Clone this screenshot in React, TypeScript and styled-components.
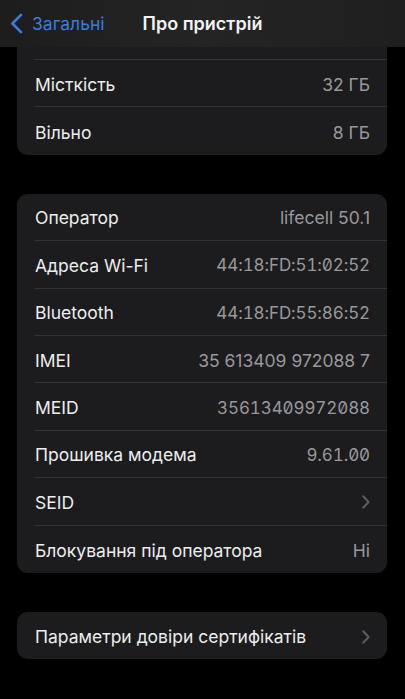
import React from "react";
import styled, { createGlobalStyle } from "styled-components";

const GlobalStyle = createGlobalStyle`
  html, body {
    margin: 0;
    padding: 0;
    background: #000;
  }
  body {
    font-family: Inter, "Noto Sans", "Liberation Sans", sans-serif;
    -webkit-font-smoothing: antialiased;
  }
`;

const Screen = styled.div`
  width: 405px;
  height: 699px;
  overflow: hidden;
  background: #000;
  display: flex;
  flex-direction: column;
`;

const NavBar = styled.header`
  flex: none;
  height: 47px;
  display: grid;
  grid-template-columns: 1fr auto 1fr;
  align-items: center;
  background: linear-gradient(90deg, #1d1d1d 0%, #242424 50%, #1f1f1f 100%);
`;

const BackButton = styled.button`
  justify-self: start;
  display: flex;
  align-items: center;
  gap: 9px;
  padding: 0 0 0 10px;
  border: 0;
  background: none;
  color: #3b7ddb;
  font-family: inherit;
  font-size: 17.5px;
  cursor: pointer;
`;

const NavTitle = styled.h1`
  margin: 0;
  color: #f2f2f2;
  font-size: 18px;
  font-weight: 600;
`;

const Content = styled.main`
  flex: 1;
  display: flex;
  flex-direction: column;
  gap: 39px;
  padding: 0 18px 0 17px;
`;

const Card = styled.section<{ $clipped?: boolean }>`
  background: #1c1c1e;
  border-radius: ${({ $clipped }) => ($clipped ? "0 0 11px 11px" : "11px")};
  overflow: hidden;
`;

const ClippedRow = styled.div`
  height: 12px;
  margin-left: 17px;
  border-bottom: 1px solid #333335;
`;

const Row = styled.div`
  box-sizing: border-box;
  height: 47.4px;
  margin-left: 18px;
  padding: 2px 17px 0 0;
  display: flex;
  align-items: center;
  justify-content: space-between;
  border-bottom: 1px solid #333335;

  &:last-child {
    border-bottom: 0;
  }
`;

const Label = styled.span`
  color: #ededed;
  font-size: 17.5px;
  white-space: nowrap;
`;

const Value = styled.span<{ $mono?: boolean }>`
  color: #98989c;
  font-size: ${({ $mono }) => ($mono ? "17px" : "17.5px")};
  letter-spacing: ${({ $mono }) => ($mono ? "-0.1px" : "0")};
  font-feature-settings: ${({ $mono }) => ($mono ? '"tnum", "zero"' : "normal")};
  white-space: nowrap;
`;

const Chevron = () => (
  <svg width="8" height="14" viewBox="0 0 8 14" fill="none">
    <path
      d="M1.2 1.2 6.6 7l-5.4 5.8"
      stroke="#5b5b5f"
      strokeWidth="2"
      strokeLinecap="round"
      strokeLinejoin="round"
    />
  </svg>
);

const BackChevron = () => (
  <svg width="13" height="21" viewBox="0 0 13 21" fill="none">
    <path
      d="M11 1.8 2.4 10.5l8.6 8.7"
      stroke="#3b7ddb"
      strokeWidth="2.6"
      strokeLinecap="round"
      strokeLinejoin="round"
    />
  </svg>
);

type Item = { label: string; value?: string; mono?: boolean; link?: boolean };

const storage: Item[] = [
  { label: "Місткість", value: "32 ГБ" },
  { label: "Вільно", value: "8 ГБ" },
];

const network: Item[] = [
  { label: "Оператор", value: "lifecell 50.1" },
  { label: "Адреса Wi-Fi", value: "44:18:FD:51:02:52", mono: true },
  { label: "Bluetooth", value: "44:18:FD:55:86:52", mono: true },
  { label: "IMEI", value: "35 613409 972088 7" },
  { label: "MEID", value: "35613409972088", mono: true },
  { label: "Прошивка модема", value: "9.61.00", mono: true },
  { label: "SEID", link: true },
  { label: "Блокування під оператора", value: "Ні" },
];

const trust: Item[] = [{ label: "Параметри довіри сертифікатів", link: true }];

const Rows = ({ items }: { items: Item[] }) => (
  <>
    {items.map((item) => (
      <Row key={item.label}>
        <Label>{item.label}</Label>
        {item.link ? <Chevron /> : <Value $mono={item.mono}>{item.value}</Value>}
      </Row>
    ))}
  </>
);

const App: React.FC = () => (
  <>
    <GlobalStyle />
    <Screen>
      <NavBar>
        <BackButton>
          <BackChevron />
          Загальні
        </BackButton>
        <NavTitle>Про пристрій</NavTitle>
        <span />
      </NavBar>
      <Content>
        <Card $clipped>
          <ClippedRow />
          <Rows items={storage} />
        </Card>
        <Card>
          <Rows items={network} />
        </Card>
        <Card>
          <Rows items={trust} />
        </Card>
      </Content>
    </Screen>
  </>
);

export default App;
